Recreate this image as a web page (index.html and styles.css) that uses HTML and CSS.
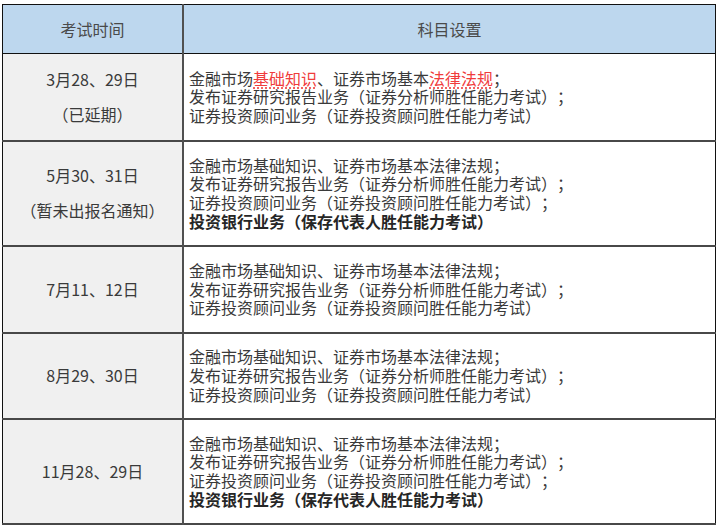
FILE: index.html
```html
<!DOCTYPE html>
<html lang="zh-CN">
<head>
<meta charset="utf-8">
<title>考试安排</title>
<link rel="stylesheet" href="styles.css">
</head>
<body>
<table class="exam">
  <thead>
    <tr class="head-row">
      <th class="col-date">考试时间</th>
      <th class="col-subj">科目设置</th>
    </tr>
  </thead>
  <tbody>
    <tr class="r-short">
      <td class="date"><p>3月28、29日</p><p>（已延期）</p></td>
      <td class="subj">
        <p>金融市场<span class="mark">基础知识</span>、证券市场基本<span class="mark">法律法规</span>；</p>
        <p>发布证券研究报告业务（证券分析师胜任能力考试）；</p>
        <p>证券投资顾问业务（证券投资顾问胜任能力考试）</p>
      </td>
    </tr>
    <tr class="r-tall">
      <td class="date"><p>5月30、31日</p><p>（暂未出报名通知）</p></td>
      <td class="subj">
        <p>金融市场基础知识、证券市场基本法律法规；</p>
        <p>发布证券研究报告业务（证券分析师胜任能力考试）；</p>
        <p>证券投资顾问业务（证券投资顾问胜任能力考试）；</p>
        <p class="strong">投资银行业务（保存代表人胜任能力考试）</p>
      </td>
    </tr>
    <tr class="r-short">
      <td class="date"><p>7月11、12日</p></td>
      <td class="subj">
        <p>金融市场基础知识、证券市场基本法律法规；</p>
        <p>发布证券研究报告业务（证券分析师胜任能力考试）；</p>
        <p>证券投资顾问业务（证券投资顾问胜任能力考试）</p>
      </td>
    </tr>
    <tr class="r-short2">
      <td class="date"><p>8月29、30日</p></td>
      <td class="subj">
        <p>金融市场基础知识、证券市场基本法律法规；</p>
        <p>发布证券研究报告业务（证券分析师胜任能力考试）；</p>
        <p>证券投资顾问业务（证券投资顾问胜任能力考试）</p>
      </td>
    </tr>
    <tr class="r-tall">
      <td class="date"><p>11月28、29日</p></td>
      <td class="subj">
        <p>金融市场基础知识、证券市场基本法律法规；</p>
        <p>发布证券研究报告业务（证券分析师胜任能力考试）；</p>
        <p>证券投资顾问业务（证券投资顾问胜任能力考试）；</p>
        <p class="strong">投资银行业务（保存代表人胜任能力考试）</p>
      </td>
    </tr>
  </tbody>
</table>
</body>
</html>
```
FILE: styles.css
```css
html, body {
  margin: 0;
  padding: 0;
  background: #ffffff;
}
body {
  padding: 4px 0 0 2px;
  font-family: "Noto Sans CJK SC", "Noto Sans", sans-serif;
  font-size: 16px;
  color: #3a3a3a;
  text-spacing-trim: space-all;
}
p {
  margin: 0;
}
.exam {
  border-collapse: collapse;
  width: 714px;
  table-layout: fixed;
  border: 1px solid #111;
}
.exam th,
.exam td {
  padding: 0;
  vertical-align: middle;
}
.head-row {
  height: 49px;
  background: #bdd7ee;
}
.exam th {
  font-weight: normal;
  color: #4a4a4a;
  text-align: center;
  border-bottom: 1px solid #111;
}
.col-date {
  width: 179px;
  border-right: 2px solid #505050;
}
.exam tbody tr {
  border-bottom: 2px solid #484848;
}
.r-short { height: 87px; }
.r-short2 { height: 86px; }
.r-tall { height: 105px; }
.date {
  background: #f0f0f0;
  text-align: center;
  line-height: 35px;
  border-right: 2px solid #505050;
}
.subj {
  padding-left: 5px !important;
  line-height: 18.7px;
  background: #ffffff;
}
.mark {
  color: #f03c3c;
  text-decoration: underline dotted #f03c3c;
  text-underline-offset: 3px;
}
.strong {
  font-weight: bold;
  color: #262626;
}
```
